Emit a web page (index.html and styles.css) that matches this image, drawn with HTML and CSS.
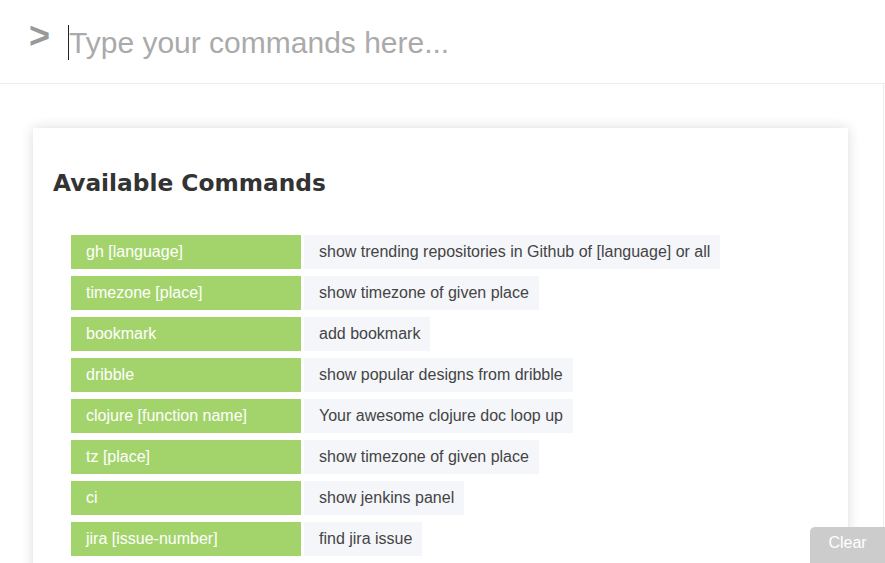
FILE: index.html
```html
<!DOCTYPE html>
<html>
<head>
<meta charset="utf-8">
<link rel="stylesheet" href="styles.css">
</head>
<body>
<div class="prompt-bar">
  <span class="prompt-sign">&gt;</span>
  <div class="prompt-input"><span class="caret"></span><span class="placeholder">Type your commands here...</span></div>
</div>
<div class="output">
  <div class="card">
    <h2 class="card-title">Available Commands</h2>
    <div class="commands">
      <div class="row"><span class="cmd">gh [language]</span><span class="desc">show trending repositories in Github of [language] or all</span></div>
      <div class="row"><span class="cmd">timezone [place]</span><span class="desc">show timezone of given place</span></div>
      <div class="row"><span class="cmd">bookmark</span><span class="desc">add bookmark</span></div>
      <div class="row"><span class="cmd">dribble</span><span class="desc">show popular designs from dribble</span></div>
      <div class="row"><span class="cmd">clojure [function name]</span><span class="desc">Your awesome clojure doc loop up</span></div>
      <div class="row"><span class="cmd">tz [place]</span><span class="desc">show timezone of given place</span></div>
      <div class="row"><span class="cmd">ci</span><span class="desc">show jenkins panel</span></div>
      <div class="row"><span class="cmd">jira [issue-number]</span><span class="desc">find jira issue</span></div>
    </div>
  </div>
</div>
<button class="clear-btn">Clear</button>
</body>
</html>
```
FILE: styles.css
```css
html, body {
  margin: 0;
  padding: 0;
  height: 100%;
  overflow: hidden;
  background: #fff;
  font-family: "Liberation Sans", Arial, sans-serif;
}
.prompt-bar {
  height: 84px;
  border-bottom: 1px solid #ececec;
  display: flex;
  align-items: flex-start;
  box-sizing: border-box;
}
.prompt-sign {
  font-family: "Liberation Sans", Arial, sans-serif;
  font-weight: bold;
  font-size: 36px;
  color: #999;
  margin: 18px 0 0 29px;
  line-height: 36px;
}
.prompt-input {
  margin: 25px 0 0 18px;
  display: flex;
  align-items: flex-start;
}
.caret {
  width: 1px;
  height: 35px;
  background: #222;
}
.placeholder {
  font-size: 30px;
  color: #aaa;
  line-height: 35px;
  margin-left: 0;
}
.output {
  width: 884px;
  height: calc(100% - 84px);
  border-right: 1px solid #ececec;
  box-sizing: border-box;
  padding: 44px 0 0 33px;
}
.card {
  width: 815px;
  background: #fff;
  box-shadow: 0 0 12px rgba(0, 0, 0, 0.14);
  padding: 40px 20px 20px;
  box-sizing: border-box;
  min-height: 500px;
}
.card-title {
  margin: 0 0 37px;
  font-family: "DejaVu Sans", Verdana, sans-serif;
  font-weight: bold;
  font-size: 23.3px;
  color: #333;
  line-height: 30px;
}
.commands {
  display: flex;
  flex-direction: column;
  gap: 7px;
  margin-left: 18px;
  font-size: 16px;
}
.row {
  display: flex;
  gap: 3px;
  height: 34px;
}
.cmd, .desc {
  display: flex;
  align-items: center;
  padding: 0 10px 0 15px;
  box-sizing: border-box;
  white-space: nowrap;
}
.cmd {
  width: 230px;
  background: #a3d46b;
  color: #fff;
}
.desc {
  background: #f5f6fa;
  color: #444;
}
.clear-btn {
  position: fixed;
  right: 0;
  bottom: 0;
  width: 75px;
  height: 36px;
  background: #ccc;
  border: none;
  border-radius: 5px 0 0 0;
  color: #fff;
  font-family: "Liberation Sans", Arial, sans-serif;
  font-size: 16px;
  padding: 0 0 4px;
}
```
